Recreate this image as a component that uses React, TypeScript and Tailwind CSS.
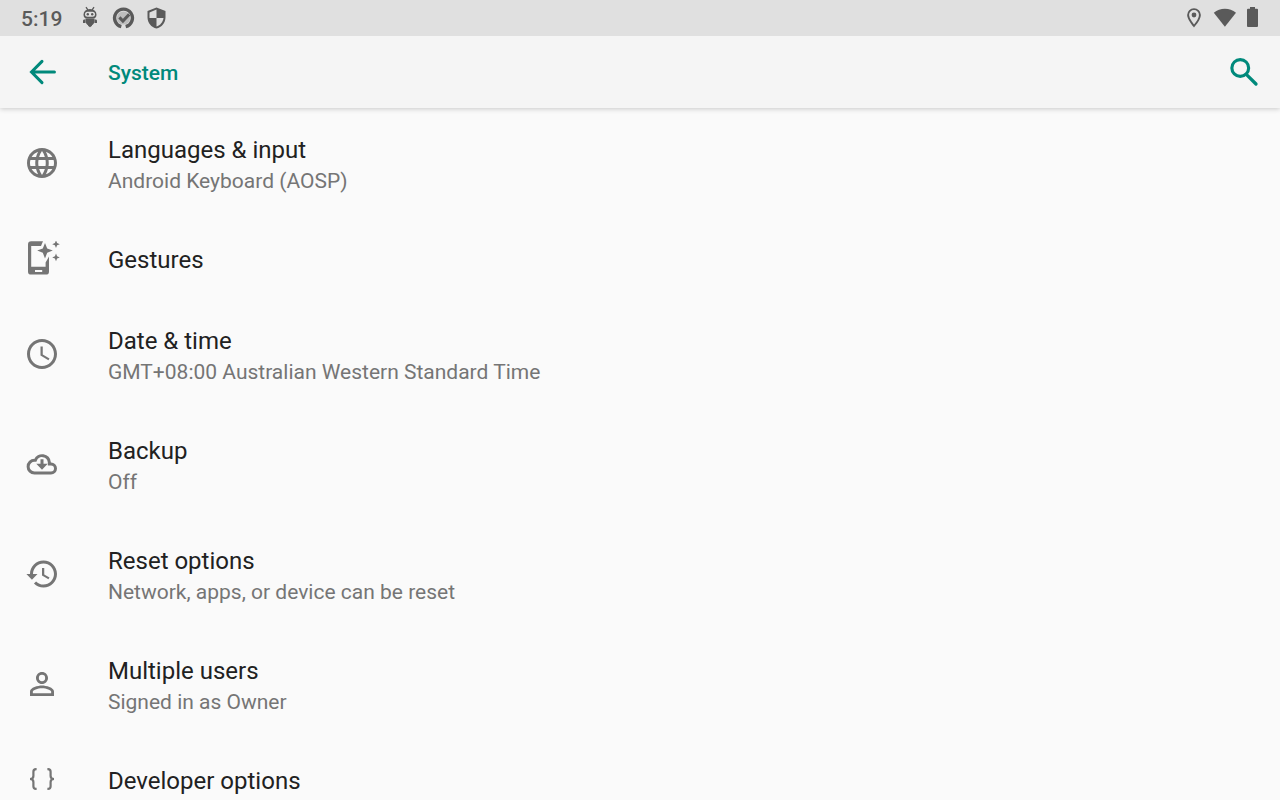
import type { ReactNode } from "react";

type IconProps = { children: ReactNode; box?: string; className?: string };

function Icon({ children, box = "0 0 24 24", className = "size-9" }: IconProps) {
  return (
    <svg viewBox={box} className={`shrink-0 ${className}`} fill="currentColor" aria-hidden="true">
      {children}
    </svg>
  );
}

const globe = (
  <Icon>
    <path d="M11.99 2C6.47 2 2 6.48 2 12s4.47 10 9.99 10C17.52 22 22 17.52 22 12S17.52 2 11.99 2zm6.93 6h-2.95c-.32-1.25-.78-2.45-1.38-3.56 1.84.63 3.37 1.91 4.33 3.56zM12 4.04c.83 1.2 1.48 2.53 1.91 3.96h-3.82c.43-1.43 1.08-2.76 1.91-3.96zM4.26 14C4.1 13.36 4 12.69 4 12s.1-1.36.26-2h3.38c-.08.66-.14 1.32-.14 2s.06 1.34.14 2H4.26zm.82 2h2.95c.32 1.25.78 2.45 1.38 3.56-1.84-.63-3.37-1.9-4.33-3.56zm2.95-8H5.08c.96-1.66 2.49-2.93 4.33-3.56C8.81 5.55 8.35 6.75 8.03 8zM12 19.96c-.83-1.2-1.48-2.53-1.91-3.96h3.82c-.43 1.43-1.08 2.76-1.91 3.96zM14.34 14H9.66c-.09-.66-.16-1.32-.16-2s.07-1.35.16-2h4.68c.09.65.16 1.32.16 2s-.07 1.34-.16 2zm.25 5.56c.6-1.11 1.06-2.31 1.38-3.56h2.95c-.96 1.65-2.49 2.93-4.33 3.56zM16.36 14c.08-.66.14-1.32.14-2s-.06-1.34-.14-2h3.38c.16.64.26 1.31.26 2s-.1 1.36-.26 2h-3.38z" />
  </Icon>
);

const gestures = (
  <Icon box="0 0 36 36">
    <path
      fillRule="evenodd"
      d="M7.200 .3H19L17 5H7.200V25.800H21.600V21.600L25 15.600V30.400a3.200 3.200 0 0 1-3.200 3.200H7.200A3.200 3.200 0 0 1 4 30.400V3.500A3.200 3.200 0 0 1 7.200.3zM11 29V31H18.200V29z"
    />
    <path d="M21 2l2.200 5.400 5.600 2.200-5.600 2.200-2.200 5.600-2.200-5.600-5.600-2.200 5.600-2.200z" />
    <path d="M32 -.6l1.100 2.700 2.700 1.100-2.700 1.100L32 7l-1.100-2.700-2.700-1.100 2.700-1.100zM32 12.600l1.100 2.700 2.700 1.100-2.700 1.100L32 20.200l-1.100-2.700-2.700-1.100 2.700-1.100z" />
  </Icon>
);

const clock = (
  <Icon>
    <path d="M11.99 2C6.47 2 2 6.48 2 12s4.47 10 9.99 10C17.52 22 22 17.52 22 12S17.52 2 11.99 2zM12 20c-4.42 0-8-3.58-8-8s3.58-8 8-8 8 3.58 8 8-3.58 8-8 8zm.5-13H11v6l5.25 3.15.75-1.23-4.5-2.67z" />
  </Icon>
);

const backup = (
  <Icon>
    <path
      d="M7 18H18a3 3 0 0 0 0-6h-1.100v-1.100A4.850 5 0 0 0 7.600 9.500H7A4.250 4.250 0 0 0 7 18z"
      fill="none"
      stroke="currentColor"
      strokeWidth="2"
    />
    <path d="M11 8.800h2v3h2.800L12 15.800 8.200 11.800H11z" />
  </Icon>
);

const reset = (
  <Icon>
    <path d="M13 3c-4.97 0-9 4.03-9 9H1.600l3.700 3.900L9 12H6c0-3.870 3.130-7 7-7s7 3.130 7 7-3.130 7-7 7c-1.930 0-3.680-.790-4.940-2.060l-1.420 1.420C8.270 19.990 10.510 21 13 21c4.970 0 9-4.030 9-9s-4.030-9-9-9zm-1 5v5l4.280 2.540.720-1.210-3.500-2.080V8H12z" />
  </Icon>
);

const person = (
  <Icon>
    <path d="M12 5.9a2.1 2.1 0 1 1 0 4.2 2.1 2.1 0 0 1 0-4.2m0 9c2.97 0 6.1 1.46 6.1 2.1v1.1H5.9V17c0-.64 3.13-2.1 6.1-2.1M12 4C9.79 4 8 5.79 8 8s1.79 4 4 4 4-1.79 4-4-1.79-4-4-4zm0 9c-2.67 0-8 1.34-8 4v3h16v-3c0-2.66-5.33-4-8-4z" />
  </Icon>
);

const braces = (
  <Icon box="0 0 36 36">
    <path
      d="M12.600 7.200H12A2.600 2.600 0 0 0 9.400 9.800V14c0 2-1 3-3.400 3 2.400 0 3.400 1 3.400 3v4.200a2.600 2.600 0 0 0 2.600 2.600h.6M23.400 7.200H24a2.600 2.600 0 0 1 2.600 2.600V14c0 2 1 3 3.400 3-2.400 0-3.400 1-3.400 3v4.200a2.600 2.600 0 0 1-2.600 2.600h-.6"
      fill="none"
      stroke="currentColor"
      strokeWidth="2.2"
    />
  </Icon>
);

const items: { title: string; summary?: string; icon: ReactNode }[] = [
  { title: "Languages & input", summary: "Android Keyboard (AOSP)", icon: globe },
  { title: "Gestures", icon: gestures },
  { title: "Date & time", summary: "GMT+08:00 Australian Western Standard Time", icon: clock },
  { title: "Backup", summary: "Off", icon: backup },
  { title: "Reset options", summary: "Network, apps, or device can be reset", icon: reset },
  { title: "Multiple users", summary: "Signed in as Owner", icon: person },
  { title: "Developer options", icon: braces },
];

function StatusBar() {
  return (
    <div className="z-20 flex h-9 shrink-0 items-center justify-between bg-[#e0e0e0] pr-4 pl-[21px] text-[#5a5a5a]">
      <div className="flex items-center">
        <time className="mr-4 pt-[2px] text-[21px] leading-9 font-medium">5:19</time>
        <div className="flex items-center gap-[9px]">
          <Icon className="size-6">
            <path d="M8 1.200l2 3M16 1.200l-2 3" fill="none" stroke="currentColor" strokeWidth="1.300" />
            <path
              fillRule="evenodd"
              d="M12 3a6.500 5.400 0 0 1 6.500 5.400v.4a3.600 3.600 0 0 1-3.600 3.600H9.100A3.600 3.600 0 0 1 5.500 8.800V8.400A6.500 5.400 0 0 1 12 3zM9.500 5.800a2.500 2.500 0 0 0 0 5h5a2.500 2.500 0 0 0 0-5z"
            />
            <circle cx="9.800" cy="8.300" r="1.200" />
            <circle cx="14.200" cy="8.300" r="1.200" />
            <path d="M7.500 12.400h9v4.200l-2 2.400H9.500l-2-2.400zM10 18.600h4v1.200l-2 1.400-2-1.400zM5.800 13.400h1.400v3.600H5V14.600zM18.200 13.400h-1.400v3.600H19V14.600z" />
          </Icon>
          <Icon className="size-6">
            <circle cx="12.500" cy="12" r="6.600" fill="#bdbdbd" />
            <path d="M10.300 20.600A8.900 8.900 0 1 1 14.700 20.600" fill="none" stroke="currentColor" strokeWidth="3.400" />
            <path d="M8.400 11.400l3.500 3.600 6.300-6.600" fill="none" stroke="currentColor" strokeWidth="3" />
          </Icon>
          <Icon className="size-6">
            <path d="M12.500 1.500L3.500 5v6.200c0 5.400 3.800 10.100 9 11.400 5.200-1.300 9-6 9-11.400V5zm0 10.500h7c-.5 4-3.300 7.400-7 8.500V12h-7V6.400l7-2.800z" />
          </Icon>
        </div>
      </div>
      <div className="flex items-center">
        <Icon className="mr-[7px] size-6">
          <path
            d="M13 3.100a5.900 5.900 0 0 0-5.900 5.900c0 4.200 5.900 11 5.900 11s5.900-6.800 5.900-11A5.900 5.900 0 0 0 13 3.100z"
            fill="none"
            stroke="currentColor"
            strokeWidth="1.900"
          />
          <circle cx="13" cy="9" r="2.400" />
        </Icon>
        <Icon className="mr-1 size-6">
          <path d="M12.900 20.800L1.800 6.700A17.500 17.500 0 0 1 24 6.700z" />
        </Icon>
        <Icon className="size-6">
          <path d="M10 1h5v1.800H17a1 1 0 0 1 1 1V20a1 1 0 0 1-1 1H8a1 1 0 0 1-1-1V3.800a1 1 0 0 1 1-1h2z" />
        </Icon>
      </div>
    </div>
  );
}

export default function App() {
  return (
    <div className="flex h-screen flex-col overflow-hidden bg-[#fafafa] font-['Roboto',sans-serif]">
      <StatusBar />
      <header className="z-10 flex h-[72px] shrink-0 items-center gap-12 bg-[#f5f5f5] pr-[18px] pl-6 text-[#00897b] shadow-[0_1px_5px_rgba(0,0,0,0.2)]">
        <button type="button" aria-label="Navigate up">
          <Icon>
            <path
              d="M20.300 12H5.400M12 4.900L5 12l7 7.100"
              fill="none"
              stroke="currentColor"
              strokeWidth="2"
              strokeLinecap="round"
            />
          </Icon>
        </button>
        <h1 className="flex-1 pt-[3px] text-[21px] font-medium">System</h1>
        <button type="button" aria-label="Search settings">
          <Icon>
            <path
              d="M14.200 14.200L20 20"
              fill="none"
              stroke="currentColor"
              strokeWidth="2.200"
              strokeLinecap="round"
            />
            <circle cx="9.500" cy="9.300" r="5.600" fill="none" stroke="currentColor" strokeWidth="2.100" />
          </Icon>
        </button>
      </header>
      <main className="flex-1 overflow-y-auto [scrollbar-width:none]">
        <ul>
          {items.map((item) => (
            <li key={item.title}>
              <a href="#" className="flex items-center gap-12 px-6 text-[#757575]">
                {item.icon}
                <span className={item.summary ? "block pt-[26px] pb-[22px]" : "block pt-[26px] pb-[23px]"}>
                  <span className="block text-2xl leading-8 text-[#212121]">{item.title}</span>
                  {item.summary && <span className="block text-[21px] leading-[30px]">{item.summary}</span>}
                </span>
              </a>
            </li>
          ))}
        </ul>
      </main>
    </div>
  );
}
